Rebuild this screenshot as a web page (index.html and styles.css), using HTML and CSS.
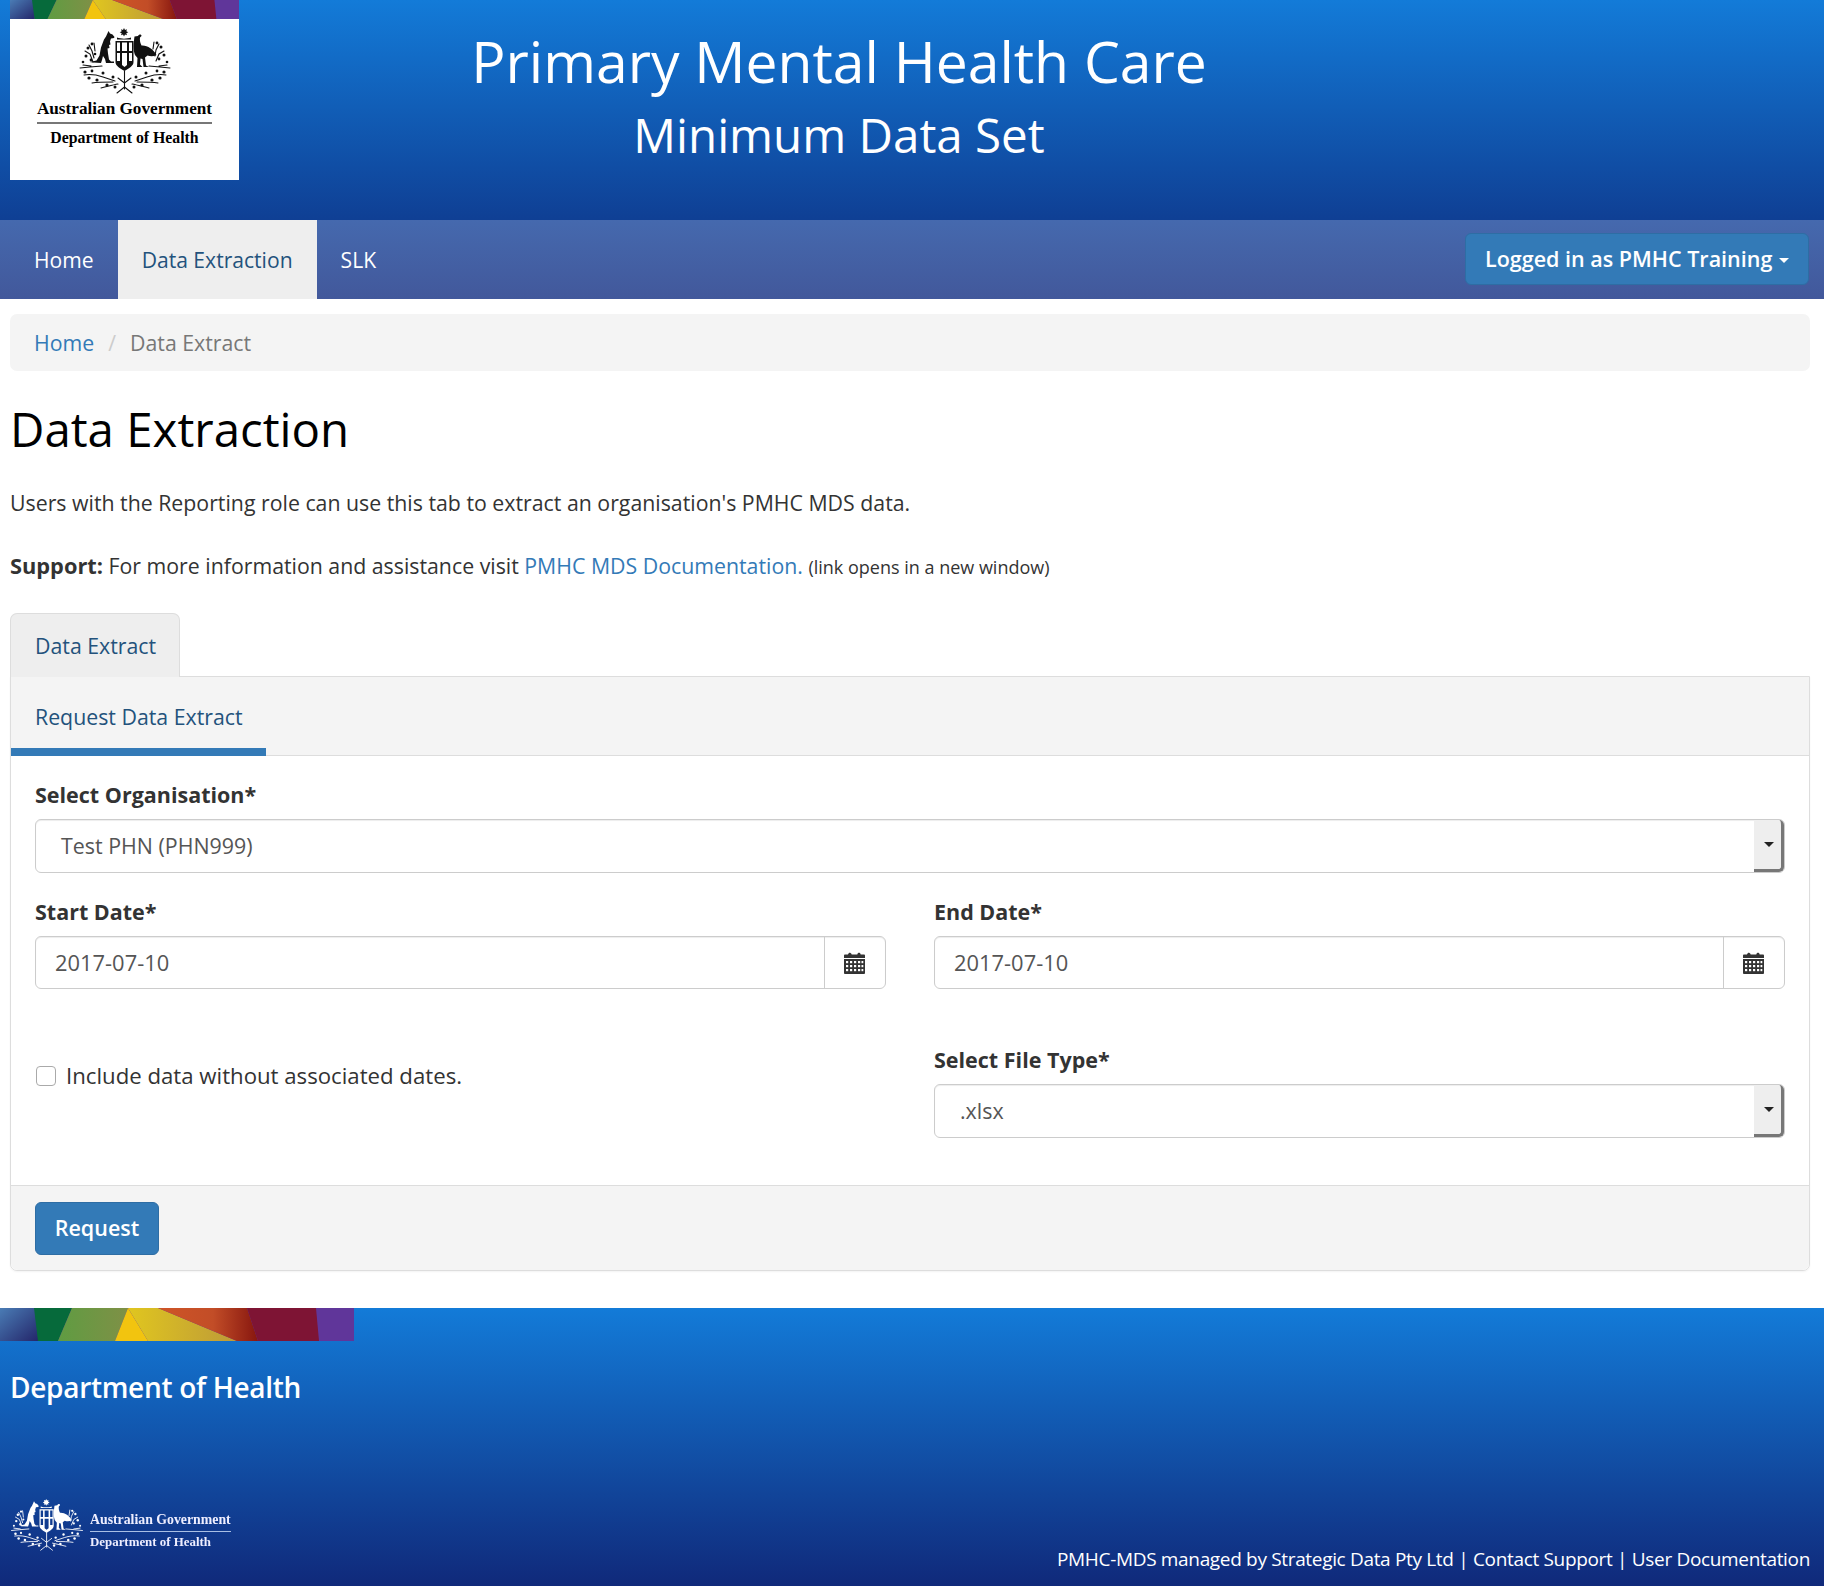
FILE: index.html
```html
<!DOCTYPE html>
<html lang="en">
<head>
<meta charset="utf-8">
<title>Primary Mental Health Care - Data Extraction</title>
<link rel="stylesheet" href="styles.css">
</head>
<body>
<svg class="defs" width="0" height="0" aria-hidden="true">
  <defs>
    <linearGradient id="gb" x1="0" y1="0" x2="1" y2="1"><stop offset="0" stop-color="#4a7cb5"/><stop offset="1" stop-color="#24266a"/></linearGradient>
    <linearGradient id="gg" x1="0" y1="0" x2="1" y2="0"><stop offset="0" stop-color="#5f9c42"/><stop offset="1" stop-color="#7f9046"/></linearGradient>
    <linearGradient id="gy" x1="0" y1="0" x2="1" y2="0"><stop offset="0" stop-color="#e0c61f"/><stop offset="1" stop-color="#bd9a38"/></linearGradient>
    <linearGradient id="go" x1="0" y1="0" x2="1" y2="0"><stop offset="0" stop-color="#cf5527"/><stop offset=".55" stop-color="#c24d27"/><stop offset="1" stop-color="#87160f"/></linearGradient>
    <symbol id="rainbow" viewBox="0 0 354 33" preserveAspectRatio="none">
      <rect width="354" height="33" fill="#60369a"/>
      <rect width="38" height="33" fill="url(#gb)"/>
      <polygon points="34,0 72,0 58,33 38,33" fill="#066a3b"/>
      <polygon points="72,0 128,0 115,33 58,33" fill="url(#gg)"/>
      <polygon points="128,0 148,33 115,33" fill="#f2c40f"/>
      <polygon points="128,0 158,0 237,33 148,33" fill="url(#gy)"/>
      <polygon points="158,0 247,0 258,33 237,33" fill="url(#go)"/>
      <polygon points="247,0 316,0 319,33 258,33" fill="#7e1434"/>
    </symbol>
    <symbol id="arms" viewBox="0 0 92 66">
      <path d="M45 0l1 2 2-.7-.7 2 2 1-2 1 .7 2-2-.7-1 2-1-2-2 .7.7-2-2-1 2-1-.7-2 2 .7z"/>
      <path d="M38 9.500c4 1.500 10 1.500 14 0v2H38z"/>
      <path transform="translate(-2.500 0)" d="M32 3l1.500 2.500 2.500 1 2 2.500-.5 1-3 .5-1 3 .5 3-1.500.5.5 3-2 .5.500 5 1 6 2 2h3v1.500h-8l-1-4-2-3-1 4-1 3-8-.5-3.500-.5 7-1.500 3-5 1.500-8 3-8 2-3z"/>
      <path transform="translate(2 0)" d="M57 8c1-2 3.500-2 3.500 0l-1.500 1.500c-.5 3 .5 6 1.500 8 5.500-.5 12 3.500 15 9.500-3 1.500-6 1.500-9 .5l-2.500 2 1 8 3 1.500h-5.500l-1-8-2-.5-.5 6 2.500 2.500h-5.500l.5-9-2.500-3c-2-5-1.500-12-.5-18.500z"/>
      <path fill-rule="evenodd" d="M36.500 13h18v21c0 4-4.500 6-9 9-4.500-3-9-5-9-9zm1.500 1.500v8.500h3v-8.500zm5 0v8.500h5v-8.500zm7 0v8.500h3v-8.500zm-12 10.500v8h3v-8zm5 0v12l2.500 2 2.500-2V25zm7 0v8h3v-8z"/>
      <g fill="none" stroke="currentColor" stroke-width="1.100" stroke-linecap="round">
        <path d="M10 17l3 6 2 7M6 23l5 3 3 8M15 15l1 8M1 40l10-1 12-1M4 37l8 1"/>
        <path d="M80 16l-3 6-1 6M85 23l-5 3-3 7M75 14l-1 7M91 40l-10-1-11-1M88 37l-8 1"/>
        <path d="M5 47c6-1 13 0 19 2l12 4M87 47c-6-1 -13 0-19 2l-12 4M13 55c6-1 13-1 21-1M79 55c-6-1-13-1-21-1M22 60c5-1 11-3 17-4M70 60c-5-1-11-3-17-4M45.500 43v18M38 65l7.500-6 7.500 6M39 50l6.500 5 6.500-5"/>
      </g>
      <g>
        <circle cx="9" cy="20" r="1.500"/><circle cx="13" cy="16" r="1.400"/><circle cx="7" cy="28" r="1.500"/><circle cx="12" cy="32" r="1.400"/><circle cx="4" cy="34" r="1.300"/><circle cx="16" cy="26" r="1.300"/>
        <circle cx="82" cy="19" r="1.500"/><circle cx="78" cy="15" r="1.400"/><circle cx="85" cy="27" r="1.500"/><circle cx="80" cy="31" r="1.400"/><circle cx="88" cy="34" r="1.300"/>
        <circle cx="6" cy="44" r="1.600"/><circle cx="13" cy="43" r="1.400"/><circle cx="10" cy="50" r="1.600"/><circle cx="18" cy="52" r="1.600"/><circle cx="24" cy="45" r="1.500"/><circle cx="28" cy="57" r="1.600"/><circle cx="34" cy="49" r="1.500"/><circle cx="36" cy="59" r="1.500"/>
        <circle cx="85" cy="44" r="1.600"/><circle cx="78" cy="43" r="1.400"/><circle cx="81" cy="50" r="1.600"/><circle cx="73" cy="52" r="1.600"/><circle cx="67" cy="45" r="1.500"/><circle cx="63" cy="57" r="1.600"/><circle cx="57" cy="49" r="1.500"/><circle cx="55" cy="59" r="1.500"/>
      </g>
    </symbol>
    <symbol id="calendar" viewBox="0 0 21 22">
      <path d="M0 3.500C0 3 .5 2.500 1 2.500h3C4.500 1 5.500 .5 6.500 1c.6.300 1 .8 1.200 1.500h5.600C13.500 1 14.500 .5 15.500 .8c.7.200 1.100.9 1.200 1.700h3.300c.5 0 1 .5 1 1V6H0zM0 7h21v14c0 .5-.5 1-1 1H1c-.5 0-1-.5-1-1z"/>
      <g fill="#fff"><rect x="2" y="9" width="2.200" height="2.200"/><rect x="6" y="9" width="2.200" height="2.200"/><rect x="10" y="9" width="2.200" height="2.200"/><rect x="14" y="9" width="2.200" height="2.200"/><rect x="17.500" y="9" width="1.800" height="2.200"/><rect x="2" y="13" width="2.200" height="2.200"/><rect x="6" y="13" width="2.200" height="2.200"/><rect x="10" y="13" width="2.200" height="2.200"/><rect x="14" y="13" width="2.200" height="2.200"/><rect x="17.500" y="13" width="1.800" height="2.200"/><rect x="2" y="17" width="2.200" height="2.200"/><rect x="6" y="17" width="2.200" height="2.200"/><rect x="10" y="17" width="2.200" height="2.200"/><rect x="14" y="17" width="2.200" height="2.200"/><rect x="17.500" y="17" width="1.800" height="2.200"/></g>
    </symbol>
  </defs>
</svg>

<header class="masthead">
  <div class="logo">
    <svg class="logo-strip"><use href="#rainbow"/></svg>
    <div class="logo-box">
      <svg class="logo-arms"><use href="#arms"/></svg>
      <div class="logo-gov">Australian Government</div>
      <div class="logo-dept">Department of Health</div>
    </div>
  </div>
  <div class="titles">
    <h1 class="title-main">Primary Mental Health Care</h1>
    <div class="title-sub">Minimum Data Set</div>
  </div>
</header>

<nav class="navbar">
  <ul class="nav-list">
    <li><a class="nav-link" href="#">Home</a></li>
    <li><a class="nav-link is-active" href="#">Data Extraction</a></li>
    <li><a class="nav-link" href="#">SLK</a></li>
  </ul>
  <button class="user-btn" type="button">Logged in as PMHC Training <span class="caret caret-white"></span></button>
</nav>

<main class="content">
  <ol class="breadcrumb">
    <li><a href="#">Home</a></li>
    <li class="crumb-sep">/</li>
    <li class="crumb-current">Data Extract</li>
  </ol>

  <h2 class="page-title">Data Extraction</h2>
  <p class="lead">Users with the Reporting role can use this tab to extract an organisation's PMHC MDS data.</p>
  <p class="support"><strong>Support:</strong> For more information and assistance visit <a href="#">PMHC MDS Documentation.</a> <small>(link opens in a new window)</small></p>

  <div class="tabs"><a class="tab" href="#">Data Extract</a></div>

  <section class="panel">
    <div class="subnav"><a class="subtab" href="#">Request Data Extract</a></div>
    <form class="form">
      <div class="field">
        <label class="field-label">Select Organisation*</label>
        <div class="select-box"><span class="select-value">Test PHN (PHN999)</span><span class="select-arrow"><span class="caret"></span></span></div>
      </div>
      <div class="form-row">
        <div class="field">
          <label class="field-label">Start Date*</label>
          <div class="date-box"><span class="date-value">2017-07-10</span><span class="date-addon"><svg class="cal"><use href="#calendar"/></svg></span></div>
        </div>
        <div class="field">
          <label class="field-label">End Date*</label>
          <div class="date-box"><span class="date-value">2017-07-10</span><span class="date-addon"><svg class="cal"><use href="#calendar"/></svg></span></div>
        </div>
      </div>
      <div class="form-row form-row-last">
        <label class="check"><span class="check-box"></span>Include data without associated dates.</label>
        <div class="field">
          <label class="field-label">Select File Type*</label>
          <div class="select-box"><span class="select-value">.xlsx</span><span class="select-arrow"><span class="caret"></span></span></div>
        </div>
      </div>
    </form>
    <div class="panel-footer"><button class="request-btn" type="button">Request</button></div>
  </section>
</main>

<footer class="site-footer">
  <svg class="footer-strip"><use href="#rainbow"/></svg>
  <div class="footer-dept">Department of Health</div>
  <div class="footer-bottom">
    <div class="footer-logo">
      <svg class="footer-arms"><use href="#arms"/></svg>
      <div class="footer-logo-text">
        <div class="footer-gov">Australian Government</div>
        <div class="footer-health">Department of Health</div>
      </div>
    </div>
    <div class="footer-links"><a href="#">PMHC-MDS managed by Strategic Data Pty Ltd</a> | <a href="#">Contact Support</a> | <a href="#">User Documentation</a></div>
  </div>
</footer>
</body>
</html>
```

FILE: styles.css
```css
* { box-sizing: border-box; }
html, body { margin: 0; padding: 0; }
body {
  font-family: "Open Sans", "Noto Sans", sans-serif;
  font-size: 21.300px;
  line-height: 1.42857;
  color: #333;
  background: #fff;
}
a { color: #337ab7; text-decoration: none; }
.defs { position: absolute; }

.masthead {
  height: 220px;
  display: flex;
  padding-left: 10px;
  background: linear-gradient(#137bd8, #0f3f94);
}
.logo { width: 229px; height: 180px; display: flex; flex-direction: column; }
.logo-strip { width: 229px; height: 19px; display: block; }
.logo-box {
  flex: 1;
  background: #fff;
  display: flex;
  flex-direction: column;
  align-items: center;
  color: #000;
  font-family: "Liberation Serif", serif;
  font-weight: 700;
}
.logo-arms { width: 92px; height: 66px; margin-top: 9px; color: #111; fill: #111; }
.logo-gov {
  font-size: 17.200px;
  line-height: 22px;
  margin-top: 4px;
  padding-bottom: 2px;
  border-bottom: 2px solid #777;
  white-space: nowrap;
}
.logo-dept { font-size: 15.800px; line-height: 20px; margin-top: 4px; }
.titles {
  width: 1200px;
  display: flex;
  flex-direction: column;
  align-items: center;
  color: #fff;
  padding-top: 25px;
}
.title-main { margin: 0; font-size: 57px; font-weight: 400; line-height: 72px; }
.title-sub { font-size: 47.500px; line-height: 62px; margin-top: 7px; }

.navbar {
  height: 79px;
  display: flex;
  justify-content: space-between;
  align-items: center;
  padding: 0 15px 0 10px;
  background: linear-gradient(#4569ae, #42589b);
}
.nav-list { list-style: none; margin: 0; padding: 0; display: flex; align-self: stretch; }
.nav-link {
  display: block;
  height: 79px;
  padding: 25px 24px;
  color: #fff;
  line-height: 29px;
  font-size: 21.100px;
}
.nav-link.is-active { background: #eee; color: #23527c; }
.user-btn {
  height: 52px;
  width: 344px;
  margin-top: -1px;
  padding: 0 0 1px;
  font: 600 21.500px/30px "Open Sans", sans-serif;
  color: #fff;
  background: #337ab7;
  border: 1px solid #2e6da4;
  border-radius: 6px;
  white-space: nowrap;
}
.caret {
  display: inline-block;
  width: 0;
  height: 0;
  vertical-align: middle;
  border-top: 5px solid #222;
  border-left: 5px solid transparent;
  border-right: 5px solid transparent;
}
.caret-white { border-top-color: #fff; margin-left: 1px; }

.content { padding: 15px 14px 0 10px; }
.breadcrumb {
  list-style: none;
  margin: 0;
  height: 57px;
  padding: 14px 24px;
  display: flex;
  gap: 14px;
  background: #f4f4f4;
  border-radius: 7px;
  line-height: 30px;
}
.crumb-sep { color: #ccc; }
.crumb-current { color: #777; }
.page-title { margin: 28px 0 0; font-size: 47.400px; font-weight: 400; line-height: 60px; color: #000; }
.lead { margin: 29px 0 0; line-height: 29px; }
.support { margin: 34px 0 0; line-height: 29px; }
.support strong { font-size: 21.800px; }
.support small { font-size: 18px; }

.tabs { margin-top: 31px; display: flex; }
.tab {
  width: 170px;
  height: 64px;
  padding: 17px 24px;
  line-height: 29px;
  color: #23527c;
  background: #eee;
  border: 1px solid #ddd;
  border-bottom: 0;
  border-radius: 7px 7px 0 0;
  position: relative;
  z-index: 1;
  white-space: nowrap;
}
.panel {
  margin-top: -1px;
  border: 1px solid #ddd;
  border-radius: 0 0 7px 7px;
  box-shadow: 0 1px 2px rgba(0, 0, 0, .05);
}
.subnav { height: 79px; display: flex; background: #f4f4f4; border-bottom: 1px solid #ddd; }
.subtab {
  width: 255px;
  height: 79px;
  padding: 25px 24px;
  line-height: 29px;
  color: #23527c;
  border-bottom: 8px solid #337ab7;
  white-space: nowrap;
}
.form { padding: 24px 24px 0; height: 429px; }
.field-label {
  display: block;
  font-weight: 700;
  font-size: 21.500px;
  line-height: 30px;
  color: #333;
  margin-bottom: 9px;
}
.select-box, .date-box {
  display: flex;
  align-items: stretch;
  background: #fff;
  border: 1px solid #ccc;
  border-radius: 6px;
  box-shadow: inset 0 1px 1px rgba(0, 0, 0, .075);
  color: #555;
  line-height: 52px;
}
.select-box { height: 54px; font-size: 21.400px; }
.date-box { height: 53px; font-size: 21.900px; }
.select-value { flex: 1; padding-left: 25px; }
.select-arrow {
  width: 30px;
  display: flex;
  align-items: center;
  justify-content: center;
  padding-left: 2px;
  background: #eee;
  border-right: 3px solid #777;
  border-bottom: 3px solid #777;
  border-radius: 0 5px 5px 0;
}
.date-value { flex: 1; padding-left: 19px; }
.date-addon {
  width: 61px;
  display: flex;
  align-items: center;
  justify-content: center;
  padding-right: 2px;
  border-left: 1px solid #ccc;
}
.cal { width: 21px; height: 22px; fill: #333; }
.form-row {
  display: grid;
  grid-template-columns: 851px 851px;
  column-gap: 48px;
  margin-top: 24px;
}
.form-row-last { margin-top: 56px; }
.check { display: flex; align-items: center; gap: 10px; margin-top: 16px; height: 30px; align-self: start; white-space: nowrap; font-size: 22.200px; }
.check-box {
  width: 20px;
  height: 20px;
  margin-left: 1px;
  background: #fff;
  border: 1px solid #aaa;
  border-radius: 4px;
}
.panel-footer { height: 85px; padding-top: 16px; background: #f4f4f4; border-top: 1px solid #ddd; border-radius: 0 0 7px 7px; padding-left: 24px; }
.request-btn {
  width: 124px;
  height: 53px;
  padding: 0 0 1px;
  font: 600 21.500px/30px "Open Sans", sans-serif;
  color: #fff;
  background: #337ab7;
  border: 1px solid #2e6da4;
  border-radius: 6px;
}

.site-footer {
  margin-top: 37px;
  height: 278px;
  padding-bottom: 13px;
  display: flex;
  flex-direction: column;
  background: linear-gradient(#137bd8, #10297a);
  color: #fff;
}
.footer-strip { width: 354px; height: 33px; display: block; }
.footer-dept { margin: 26px 0 0 10px; font-size: 28px; font-weight: 600; line-height: 40px; letter-spacing: -.3px; }
.footer-bottom {
  margin-top: auto;
  padding: 0 14px 0 10px;
  display: flex;
  justify-content: space-between;
  align-items: flex-end;
}
.footer-logo { display: flex; align-items: flex-end; gap: 6px; margin-bottom: 22px; filter: blur(.5px); }
.footer-arms { width: 74px; height: 52px; color: #fff; fill: #fff; }
.footer-logo-text { font-family: "Liberation Serif", serif; font-weight: 700; font-size: 13.800px; color: #eef; }
.footer-gov { line-height: 17px; padding-bottom: 3px; border-bottom: 1px solid #a9bfe4; white-space: nowrap; }
.footer-health { line-height: 17px; padding-top: 2px; font-size: 12.900px; }
.footer-links { font-size: 19px; line-height: 27px; letter-spacing: -.33px; }
.footer-links a { color: #fff; }
```
